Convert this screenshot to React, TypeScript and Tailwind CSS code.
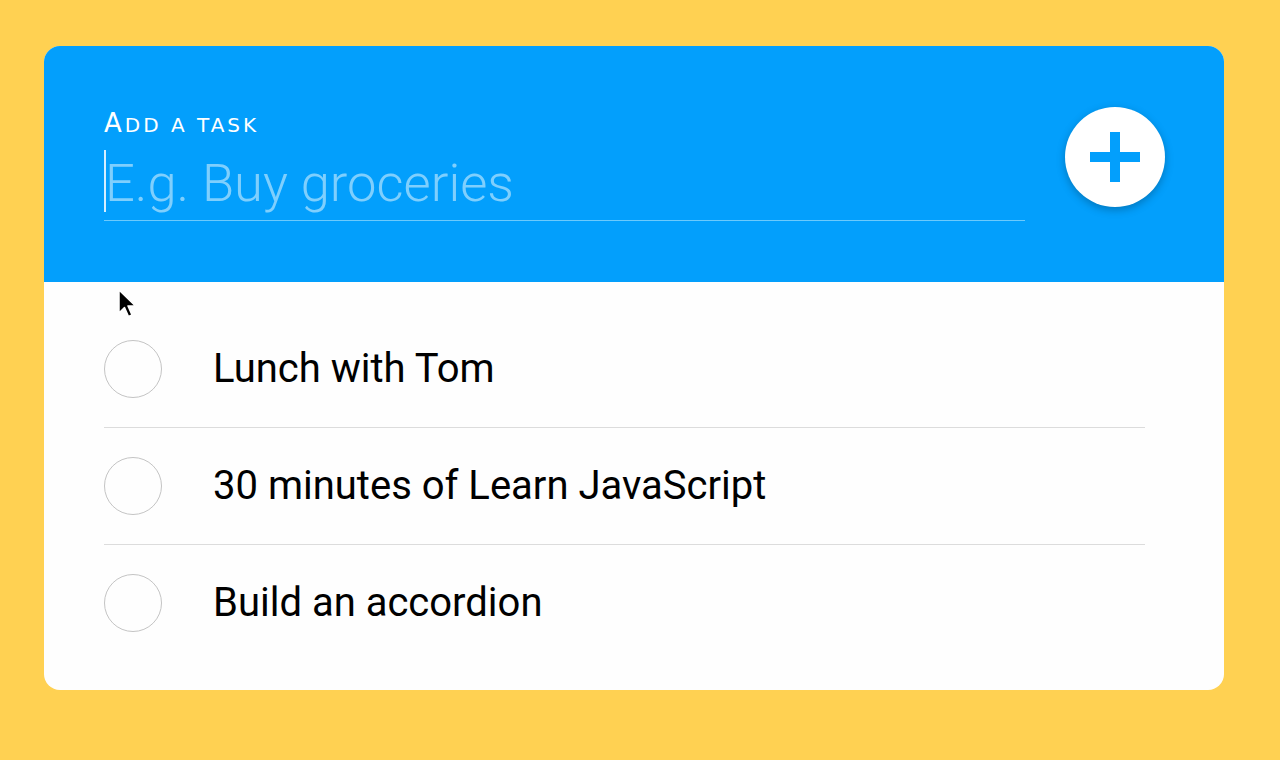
import { useState } from "react";

const TASKS = ["Lunch with Tom", "30 minutes of Learn JavaScript", "Build an accordion"];

export default function App() {
  const [text, setText] = useState("");

  return (
    <div className="min-h-[760px] w-full bg-[#ffd152] px-[44px] pt-[46px] pb-[70px] font-['Roboto',sans-serif]">
      <div className="relative w-[1180px] overflow-hidden rounded-[16px] bg-[#fefefe]">
        {/* Header */}
        <div className="flex h-[236px] items-start bg-[#039ffc] pl-[60px] pr-[59px]">
          <div className="flex-1 pt-[62px] pr-[40px]">
            <label className="block font-['DejaVu_Sans',sans-serif] text-[26px] leading-[30px] text-white tracking-[3px]">
              A<span className="text-[20px] uppercase">dd a task</span>
            </label>
            <div className="relative mt-[4px] border-b border-[#6ccafd]">
              <span className="absolute left-0 top-[6px] h-[62px] w-[2px] bg-[#d5eefe]" />
              <input
                value={text}
                onChange={(e) => setText(e.target.value)}
                placeholder="E.g. Buy groceries"
                className="h-[76px] w-full bg-transparent pl-[1px] pt-[2px] text-[52.5px] font-light leading-[66px] text-white outline-none placeholder:text-[#7fcffd]"
              />
            </div>
          </div>
          <button
            type="button"
            className="mt-[61px] flex h-[100px] w-[100px] items-center justify-center rounded-full bg-white shadow-[0_3px_8px_rgba(0,0,0,0.25)]"
          >
            <svg width="50" height="50" viewBox="0 0 50 50">
              <rect x="20" y="0" width="10" height="50" fill="#039ffc" />
              <rect x="0" y="20" width="50" height="10" fill="#039ffc" />
            </svg>
          </button>
        </div>

        {/* List */}
        <ul className="pl-[60px] pr-[79px] py-[29px]">
          {TASKS.map((t, i) => (
            <li
              key={t}
              className={`flex h-[116px] items-center ${i < TASKS.length - 1 ? "h-[117px] border-b border-[#dcdcdc]" : ""}`}
            >
              <span className="h-[58px] w-[58px] shrink-0 rounded-full border-[1.5px] border-[#c4c4c4]" />
              <span className="ml-[51px] text-[40px] text-black">{t}</span>
            </li>
          ))}
        </ul>

        {/* mouse pointer */}
        <svg className="absolute left-[74px] top-[243px]" width="22" height="32" viewBox="0 0 22 32">
          <path d="M1 1 L1 24 L6.5 18.5 L10.5 27.5 L14 26 L10 17 L17.5 17 Z" fill="#000" stroke="#fff" strokeWidth="1.5" strokeLinejoin="round" />
        </svg>
      </div>
    </div>
  );
}
